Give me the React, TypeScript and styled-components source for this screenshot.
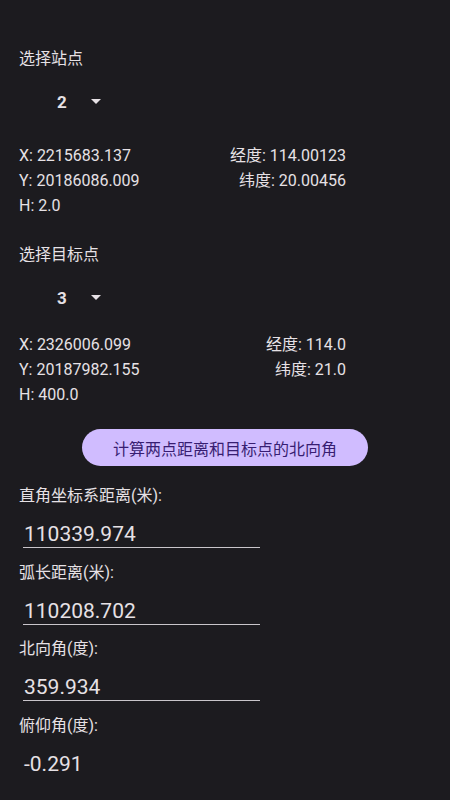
import styled, { createGlobalStyle } from "styled-components";

const GlobalStyle = createGlobalStyle`
  html, body {
    margin: 0;
    padding: 0;
    background: #1c1b1f;
  }
  body {
    font-family: Roboto, "Noto Sans CJK SC", sans-serif;
    color: #e6e1e5;
  }
`;

type PointData = {
  label: string;
  value: string;
  x: string;
  y: string;
  h: string;
  lng: string;
  lat: string;
  coordsGap: number;
};

type ResultData = {
  label: string;
  value: string;
  underline: boolean;
};

const points: PointData[] = [
  {
    label: "选择站点",
    value: "2",
    x: "2215683.137",
    y: "20186086.009",
    h: "2.0",
    lng: "114.00123",
    lat: "20.00456",
    coordsGap: 19,
  },
  {
    label: "选择目标点",
    value: "3",
    x: "2326006.099",
    y: "20187982.155",
    h: "400.0",
    lng: "114.0",
    lat: "21.0",
    coordsGap: 12,
  },
];

const results: ResultData[] = [
  { label: "直角坐标系距离(米):", value: "110339.974", underline: true },
  { label: "弧长距离(米):", value: "110208.702", underline: true },
  { label: "北向角(度):", value: "359.934", underline: true },
  { label: "俯仰角(度):", value: "-0.291", underline: false },
];

const App = () => {
  return (
    <>
      <GlobalStyle />
      <Page>
        {points.map((p, i) => (
          <PointSection key={p.label} $first={i === 0}>
            <Label>{p.label}</Label>
            <Spinner>
              <SpinnerValue>{p.value}</SpinnerValue>
              <Caret />
            </Spinner>
            <Coords $gap={p.coordsGap}>
              <CoordColumn>
                <CoordLine>X: {p.x}</CoordLine>
                <CoordLine>Y: {p.y}</CoordLine>
                <CoordLine>H: {p.h}</CoordLine>
              </CoordColumn>
              <CoordColumn $right>
                <CoordLine>经度: {p.lng}</CoordLine>
                <CoordLine>纬度: {p.lat}</CoordLine>
              </CoordColumn>
            </Coords>
          </PointSection>
        ))}

        <ButtonRow>
          <CalcButton>计算两点距离和目标点的北向角</CalcButton>
        </ButtonRow>

        <Results>
          {results.map((r) => (
            <ResultItem key={r.label}>
              <Label>{r.label}</Label>
              <Field $underline={r.underline}>{r.value}</Field>
            </ResultItem>
          ))}
        </Results>
      </Page>
    </>
  );
};

export default App;

const Page = styled.div`
  width: 450px;
  min-height: 800px;
  padding-top: 48px;
  box-sizing: border-box;
  display: flex;
  flex-direction: column;
`;

const PointSection = styled.section<{ $first?: boolean }>`
  padding-left: 19px;
  margin-top: ${(p) => (p.$first ? "0" : "25.5px")};
  display: flex;
  flex-direction: column;
`;

const Label = styled.div`
  font-size: 16px;
  line-height: 22px;
  color: #e6e1e5;
`;

const Spinner = styled.div`
  height: 44px;
  margin-top: 10px;
  margin-left: 38px;
  display: flex;
  align-items: center;
  gap: 24px;
`;

const SpinnerValue = styled.span`
  font-size: 17px;
  font-weight: 700;
  color: #e6e1e5;
  line-height: 20px;
`;

const Caret = styled.span`
  width: 0;
  height: 0;
  border-left: 5px solid transparent;
  border-right: 5px solid transparent;
  border-top: 5px solid #e6e1e5;
  margin-top: -1px;
`;

const Coords = styled.div<{ $gap: number }>`
  width: 327px;
  margin-top: ${(p) => p.$gap}px;
  display: flex;
  justify-content: space-between;
`;

const CoordColumn = styled.div<{ $right?: boolean }>`
  display: flex;
  flex-direction: column;
  text-align: ${(p) => (p.$right ? "right" : "left")};
`;

const CoordLine = styled.div`
  font-size: 16px;
  line-height: 25px;
  color: #e6e1e5;
  white-space: nowrap;
`;

const ButtonRow = styled.div`
  margin-top: 22.5px;
  display: flex;
  justify-content: center;
`;

const CalcButton = styled.button`
  width: 286px;
  height: 37px;
  border: none;
  border-radius: 19px;
  background: #d0bcff;
  color: #381e72;
  font-family: Roboto, "Noto Sans CJK SC", sans-serif;
  font-size: 16px;
  padding: 0;
  cursor: pointer;
`;

const Results = styled.div`
  padding-left: 19px;
  margin-top: 19px;
  display: flex;
  flex-direction: column;
  gap: 13.5px;
`;

const ResultItem = styled.div`
  display: flex;
  flex-direction: column;
`;

const Field = styled.div<{ $underline: boolean }>`
  width: 237px;
  margin-top: 14px;
  margin-left: 4px;
  padding: 2px 0 2px 1px;
  box-sizing: border-box;
  font-size: 21px;
  line-height: 22px;
  color: #e6e1e5;
  border-bottom: 1.5px solid ${(p) => (p.$underline ? "#c9c5ca" : "transparent")};
`;
